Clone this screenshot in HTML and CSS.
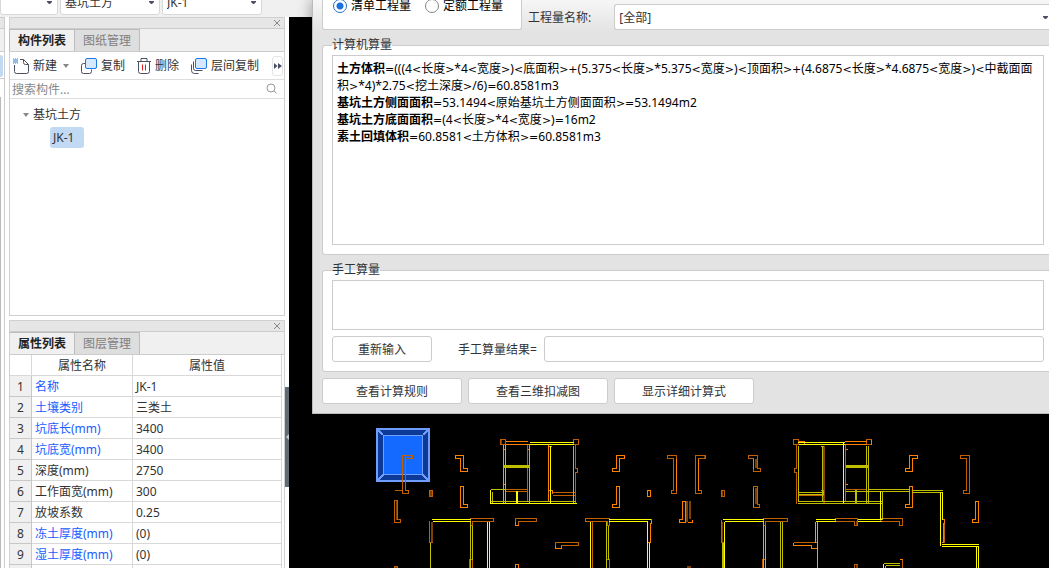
FILE: index.html
```html
<!DOCTYPE html>
<html lang="zh-CN">
<head>
<meta charset="utf-8">
<title>工程量计算</title>
<link rel="stylesheet" href="styles.css">
</head>
<body>
<div class="app">
  <header class="topbar">
    <select class="combo combo-floor" aria-label="楼层"><option></option></select>
    <select class="combo combo-type" aria-label="构件类型"><option>基坑土方</option></select>
    <select class="combo combo-item" aria-label="构件"><option>JK-1</option></select>
  </header>

  <div class="workspace">
    <aside class="rail">
      <div class="rail-head"></div>
      <div class="rail-tabs"></div>
      <div class="rail-active"><span></span></div>
      <div class="rail-body"></div>
    </aside>

    <div class="docks">
      <section class="dock">
        <div class="dock-title"><button class="close" aria-label="关闭"><svg viewBox="0 0 8 8"><path d="M1 1l6 6M7 1l-6 6"/></svg></button></div>
        <div class="tabs"><button class="tab active">构件列表</button><button class="tab">图纸管理</button></div>
        <div class="toolbar">
          <button class="tool">
            <svg class="icon" viewBox="0 0 16 16"><path d="M1.500 7v6.500q0 2 2 2h10q2 0 2-2v-7l-5-5H7M10.500 1.500v3q0 2 2 2h3"/><path class="dots" d="M0 1h1M2 1h1M4 1h1M1 2h1M3 2h1M0 3h1M2 3h1M4 3h1M1 4h1M3 4h1M0 5h1M2 5h1M4 5h1"/></svg>
            新建<i class="caret"></i>
          </button>
          <button class="tool">
            <svg class="icon" viewBox="0 0 16 16"><path d="M5 5.500H2.500q-2 0-2 2v6q0 2 2 2h6q2 0 2-2v-2"/><rect class="blue" x="4.500" y=".5" width="11" height="10" rx="1.500"/></svg>
            复制
          </button>
          <button class="tool">
            <svg class="icon icon-trash" viewBox="0 0 14 16"><path d="M0 3.500h14M4 3V.500h6V3M1.500 4v9.500q0 2 2 2h7q2 0 2-2V4"/><path class="red" d="M5.500 6.500v6M8.500 6.500v6"/></svg>
            删除
          </button>
          <button class="tool">
            <svg class="icon" viewBox="0 0 16 16"><path d="M2.500 3.500v7q0 2 2 2h7M.500 6.500v6q0 3 3 3h4"/><rect class="blue" x="4.500" y=".5" width="11" height="10" rx="1.500"/></svg>
            层间复制
          </button>
          <button class="more" aria-label="更多"><svg viewBox="0 0 8 6"><path d="M0 0l3.500 3L0 6zM4 0l4 3-4 3z"/></svg></button>
        </div>
        <label class="search"><input type="text" placeholder="搜索构件..." aria-label="搜索构件"><svg viewBox="0 0 12 12"><circle cx="5" cy="5" r="4"/><path d="M8 8l2.500 2.500"/></svg></label>
        <ul class="tree">
          <li><span class="node"><i class="caret"></i>基坑土方</span>
            <ul><li><span class="leaf">JK-1</span></li></ul>
          </li>
        </ul>
      </section>

      <section class="dock dock-props">
        <div class="dock-title"><button class="close" aria-label="关闭"><svg viewBox="0 0 8 8"><path d="M1 1l6 6M7 1l-6 6"/></svg></button></div>
        <div class="tabs"><button class="tab active">属性列表</button><button class="tab">图层管理</button></div>
        <table class="props">
          <colgroup><col class="col-no"><col class="col-name"><col></colgroup>
          <thead><tr><th></th><th>属性名称</th><th>属性值</th></tr></thead>
          <tbody>
            <tr><th>1</th><td class="key">名称</td><td>JK-1</td></tr>
            <tr><th>2</th><td class="key">土壤类别</td><td>三类土</td></tr>
            <tr><th>3</th><td class="key">坑底长(mm)</td><td>3400</td></tr>
            <tr><th>4</th><td class="key">坑底宽(mm)</td><td>3400</td></tr>
            <tr><th>5</th><td>深度(mm)</td><td>2750</td></tr>
            <tr><th>6</th><td>工作面宽(mm)</td><td>300</td></tr>
            <tr><th>7</th><td>放坡系数</td><td>0.25</td></tr>
            <tr><th>8</th><td class="key">冻土厚度(mm)</td><td>(0)</td></tr>
            <tr><th>9</th><td class="key">湿土厚度(mm)</td><td>(0)</td></tr>
            <tr><th></th><td></td><td></td></tr>
          </tbody>
        </table>
      </section>
    </div>

    <div class="splitter"><button class="collapse" aria-label="收起"><svg viewBox="0 0 3 6"><path d="M3 0v6L0 3z"/></svg></button></div>

    <main class="canvas">
      <svg class="plan" viewBox="289 17 760 551" preserveAspectRatio="xMinYMin slice">
        <g class="pit">
          <path class="slope" d="M377 429h52v52h-52z"/>
          <path class="floor" d="M383.500 435.500h39v39h-39z"/>
          <path class="edge" d="M377 429h52v52h-52z"/>
          <path class="ridge" d="M377 429l6 6M429 429l-6 6M377 481l6-6M429 481l-6-6"/>
        </g>
        <g class="brown">
          <path d="M431 490v6M397 501v19M432 522v21M756 459v9M756 488v16M722 491v5M687 501v21M690 501v18M722 522v21M824 446v57M705 456v2M857 521v4M501 440v4M395 567h2M857 565v3M687 567h4"/>
        </g>
        <g transform="translate(.5 .5)">
          <g class="wall-dim">
            <path d="M402 455h10v3h-7v32h3v3h-6zM394 490h8M429 490h3v6h-3z"/>
            <path d="M394 500h3v19h3v3h-6zM394 568v-2h3v2"/>
            <path d="M527 444v57M505 489h22M505 491h22M552 492h23M552 495h23M575 444v24h2v4h-2v30M573 439h5v5h-5zM500 439h5v5h-5z"/>
            <path d="M470 518h23v3h-21v4h-2zM429 520v22h3M469 568v-9h3v9"/>
            <path d="M515 518h21v3h-18v4h-3zM555 542h23v3h-17v3h-6z"/>
            <path d="M585 518h24v7h-2v-4h-22zM592 521v47M606 568v-9h3v9"/>
            <path d="M667 455h9v38h-5v-3h2v-32h-6zM695 455h10v3h-7v32h3v3h-6z"/>
            <path d="M748 455h9v13h3v3h-7v-13h-5zM753 486h4v18h2v3h-6z"/>
            <path d="M721 490h3v6h-3zM721 519v23h3M763 518h24v3h-22v4h-2zM762 568v-9h3v9"/>
            <path d="M793 439h5v5h-5zM796 444v24h-2v4h2v31M797 495h26M866 439h5v5h-5zM845 489h21M845 444v57"/>
            <path d="M835 518h22v7h-3v-4h-19zM880 518h22v7h-3v-4h-19zM793 542h24M960 455h9v38h-6v-3h3v-32h-6z"/>
            <path d="M942 519h2v23h-2M854 568v-4h3M902 568v-9"/>
          </g>
          <g class="wall">
            <path d="M455 455h8v13h4v3h-7v-13h-5zM460 486h3v18h4v3h-7z"/>
            <path d="M505 441h22M505 444h24M548 444v57M548 446h3M548 490h4v3M503 449h2M527 449h2M503 484h2"/>
            <path d="M515 521v4h3M515 568v-4h3v4M555 545v3h6v-3"/>
            <path d="M616 455h8v3h-5v13h-7v-3h4zM616 486h3v21h-7v-3h4zM647 490h3v6h-3z"/>
            <path d="M682 501h3v21h-6v-3h3zM687 522h5v-3M676 458v32M698 458v32M649 519h2v4h-1v19h-3M753 458v10M753 488v18"/>
            <path d="M844 441h22M844 444h22M798 441h6v3M871 439v5M820 446h3M820 490h3v3M845 449h2M845 484h2"/>
            <path d="M909 455h8v3h-5v13h-7v-3h4zM909 486h3v21h-7v-3h4zM793 542v3h18v3h6M975 501h3v21h-6v-3h3zM942 519h2v4h-1v19h-2M899 559h3"/>
          </g>
          <g class="beam-dim">
            <path d="M503 444v58M505 444v58M529 444v58M573 445v58M503 465h26M503 466h26M503 467h26M490 489h15M490 501h85M492 491v11M430 542v26M470 521v47M472 525v34"/>
            <path d="M606 521v47M608 525v34M763 521v47M765 525v43M780 521v47M782 521v47M722 542v26M723 542v26"/>
            <path d="M798 445v56M822 445v56M866 445v58M868 445v58M845 465h23M845 466h23M845 467h23M797 492h26M797 494h26M797 501h84M797 503h84M856 489v14M855 489v14"/>
            <path d="M845 491h64M868 489h41M911 490h31M911 492h31M882 491v28M817 521v47M815 521v21M883 563h16M885 565h14M885 565v3"/>
          </g>
          <g class="beam">
            <path d="M529 442h44M529 444h44M550 445v57M490 503h86M490 489v14M516 490v12M517 490v12M431 519h39M432 521h38M487 521v47M489 521v47"/>
            <path d="M608 519h42M608 521h39M647 521v47M649 542v26M590 521v47M722 519h41M724 521h39M724 521v47"/>
            <path d="M797 442h47M798 444h46M843 441v61M880 490v29M815 519h20M815 521h20M857 519h24M857 521h24M940 491v54M942 491v28M941 544h37M941 546h37M976 546v22M978 546v22M883 563v5"/>
          </g>
        </g>
      </svg>
    </main>
  </div>

  <section class="dialog" aria-label="查看工程量计算式">
    <div class="dialog-top">
      <div class="mode">
        <label><input type="radio" name="mode" checked>清单工程量</label>
        <label><input type="radio" name="mode">定额工程量</label>
      </div>
      <label class="quantity" for="quantity">工程量名称:</label>
      <select class="combo combo-quantity" id="quantity"><option>[全部]</option></select>
    </div>
    <fieldset class="group">
      <legend>计算机算量</legend>
      <div class="formula">
        <p><b>土方体积</b><i>=</i>(((4<i>&lt;</i>长度<i>&gt;</i>*4<i>&lt;</i>宽度<i>&gt;</i>)<i>&lt;</i>底面积<i>&gt;+</i>(5.375<i>&lt;</i>长度<i>&gt;</i>*5.375<i>&lt;</i>宽度<i>&gt;</i>)<i>&lt;</i>顶面积<i>&gt;+</i>(4.6875<i>&lt;</i>长度<i>&gt;</i>*4.6875<i>&lt;</i>宽度<i>&gt;</i>)<i>&lt;</i>中截面面<br>积<i>&gt;</i>*4)*2.75<i>&lt;</i>挖土深度<i>&gt;</i>/6)<i>=</i>60.8581m3</p>
        <p><b>基坑土方侧面面积</b><i>=</i>53.1494<i>&lt;</i>原始基坑土方侧面面积<i>&gt;=</i>53.1494m2</p>
        <p><b>基坑土方底面面积</b><i>=</i>(4<i>&lt;</i>长度<i>&gt;</i>*4<i>&lt;</i>宽度<i>&gt;</i>)<i>=</i>16m2</p>
        <p><b>素土回填体积</b><i>=</i>60.8581<i>&lt;</i>土方体积<i>&gt;=</i>60.8581m3</p>
      </div>
    </fieldset>
    <fieldset class="group">
      <legend>手工算量</legend>
      <textarea class="manual" aria-label="手工算量"></textarea>
      <div class="manual-row">
        <button class="btn btn-reset">重新输入</button>
        <label for="result">手工算量结果=</label>
        <input class="result" id="result" type="text">
      </div>
    </fieldset>
    <div class="actions">
      <button class="btn">查看计算规则</button>
      <button class="btn">查看三维扣减图</button>
      <button class="btn">显示详细计算式</button>
    </div>
  </section>
</div>
</body>
</html>
```
FILE: styles.css
```css
* { box-sizing: border-box; }
body, p, ul { margin: 0; padding: 0; }
ul { list-style: none; }
body, button, input, select, textarea {
  font: 12px/17px "Noto Sans", "Noto Sans CJK SC", sans-serif;
  color: #333;
}
button { border: 0; padding: 0; background: none; white-space: nowrap; }
svg { display: block; fill: none; }

.app { position: relative; height: 100vh; overflow: hidden; display: flex; flex-direction: column; background: #fff; }

.combo {
  appearance: none;
  height: 26px;
  padding: 0 4px;
  border: 1px solid #ccc;
  border-radius: 3px;
  background: #fff url("data:image/svg+xml,%3Csvg xmlns='http://www.w3.org/2000/svg' viewBox='0 0 5 3'%3E%3Cpath d='M0 0h5v1L3 3H2L0 1z' fill='%234a5068'/%3E%3C/svg%3E") no-repeat right 5px center / 5px 3px;
}
.topbar { flex: none; height: 17px; display: flex; align-items: flex-end; gap: 2px; padding-bottom: 2px; background: #f0f0f0; }
.topbar .combo { border-color: #d8d8d8; }
.combo-floor { width: 58px; }
.combo-type { width: 100px; }
.combo-item { width: 100px; }

.workspace { flex: 1; min-height: 0; display: flex; }

.rail { width: 5px; margin-right: 4px; display: flex; flex-direction: column; border-right: 1px solid #ccc; }
.rail-head { height: 12px; background: #e6e6e6; border: solid #ccc; border-width: 1px 0; }
.rail-tabs { height: 23px; background: #f0f0f0; border-bottom: 1px solid #ccc; }
.rail-active { height: 27px; padding: 3px 1px 2px 0; border-bottom: 1px solid #ccc; }
.rail-active span { display: block; height: 22px; background: #c2d9f3; border-radius: 0 3px 3px 0; }
.rail-body { flex: 1; margin-top: 18px; border-left: 1px solid #bbb; }

.docks { width: 276px; display: flex; flex-direction: column; gap: 4px; }
.dock { height: 299px; flex: none; display: flex; flex-direction: column; border: 1px solid #d0d0d0; }
.dock-props { height: auto; flex: 1; min-height: 0; overflow: hidden; border-bottom: 0; }
.dock-title { flex: none; height: 11px; display: flex; justify-content: flex-end; padding: 1px 3px; background: #e6e6e6; border-bottom: 1px solid #ccc; }
.close svg { width: 8px; height: 8px; stroke: #888; }
.tabs { flex: none; height: 23px; display: flex; background: #f0f0f0; border-bottom: 1px solid #ccc; }
.tab { width: 66px; margin-left: -1px; border: 1px solid #bcbcbc; border-bottom: 0; background: #dedede; color: #808080; }
.tab.active { background: #f0f0f0; color: #222; font-weight: bold; }

.toolbar { flex: none; height: 28px; display: flex; align-items: center; gap: 12px; padding-left: 3px; border-bottom: 1px solid #ddd; }
.tool { display: flex; align-items: center; gap: 4px; }
.icon { width: 16px; height: 16px; stroke: #4a5060; }
.icon-trash { width: 14px; }
.icon .blue { stroke: #1c78e6; fill: #d6e8fc; }
.icon .red { stroke: #e02020; }
.icon .dots { stroke: #1c78e6; }
.caret { width: 0; border: 3px solid transparent; border-top: 4px solid #888; border-bottom: 0; }
.tool .caret { margin-left: 2px; }
.more { flex: none; width: 11px; height: 20px; margin: 0 1px 0 auto; display: grid; place-items: center; border: 1px solid #e4e4e4; border-radius: 3px; }
.more svg { width: 8px; height: 6px; fill: #4a5068; }

.search { flex: none; height: 19px; display: flex; align-items: center; padding: 0 6px 0 2px; border-bottom: 1px solid #ddd; }
.search input { flex: 1; min-width: 0; border: 0; padding: 0; outline: 0; background: none; }
.search input::placeholder { color: #888; }
.search svg { width: 12px; height: 12px; stroke: #999; }

.tree { padding: 5px 0 0 13px; }
.node { display: flex; align-items: center; gap: 4px; height: 21px; }
.leaf { display: inline-block; margin: 2px 0 0 27px; padding: 2px 10px 2px 3px; background: #c2d9f3; border-radius: 3px; }

.props { width: 272px; flex: none; table-layout: fixed; border-collapse: separate; border-spacing: 0; }
.col-no { width: 22px; }
.col-name { width: 101px; }
.props th, .props td { height: 21px; padding: 0 3px; border: solid #d8d8d8; border-width: 0 1px 1px 0; font-weight: normal; text-align: left; line-height: 17px; }
.props th { padding: 0; text-align: center; }
.props tbody th { background: #f0f0f0; border-color: #c8c8c8; }
.props .key { color: #1a5cff; }

.splitter { width: 4px; padding-top: 370px; }
.collapse { width: 4px; height: 100px; display: flex; align-items: center; justify-content: flex-end; background: #5f6b77; }
.collapse svg { width: 3px; height: 6px; fill: #c4cad0; }

.canvas { flex: 1; min-width: 0; background: #000; }
.plan { width: 100%; height: 100%; shape-rendering: crispEdges; }
.wall { stroke: #ff8000; }
.wall-dim { stroke: #c06000; }
.brown { stroke: #804000; stroke-width: 2px; }
.beam { stroke: #ff0; }
.beam-dim { stroke: #bfbf00; }
.slope { fill: #0c3a96; }
.floor { fill: #146aff; stroke: #6f9eff; }
.edge { stroke: #6f9eff; stroke-width: 2px; }
.ridge { stroke: #6f9eff; stroke-width: 2px; }

.dialog {
  position: absolute; top: 0; left: 312px; right: 0;
  padding: 0 0 9px 9px;
  border: solid #bbb; border-width: 0 0 1px 1px;
  background: linear-gradient(#f6f6f6, #e3e3e3 32px);
  box-shadow: 0 0 14px rgba(0, 0, 0, .4);
}
.dialog-top { display: flex; align-items: flex-end; height: 30px; }
.mode { width: 200px; height: 30px; padding: 0 10px; display: flex; align-items: flex-start; gap: 14px; border: 1px solid #ccc; border-top: 0; border-radius: 0 0 3px 3px; background: #fff; }
.mode label { display: flex; align-items: center; gap: 4px; height: 12px; line-height: 12px; color: #000; }
.mode input { appearance: none; width: 14px; height: 14px; margin: 0; border: 1px solid #888; border-radius: 50%; background: #fff; }
.mode input:checked { border-color: #2a6fc4; background: radial-gradient(#1c6fe0 3px, #fff 4px); }
.quantity { margin: 0 23px 4px 6px; }
.combo-quantity { flex: 1; border-right: 0; border-radius: 3px 0 0 3px; background-position: right 1px center; }

.group { min-width: 0; margin: 8px 0 0; padding: 3px 5px 9px 9px; border: 1px solid #ccc; border-right: 0; border-radius: 3px 0 0 3px; background: #fff; }
.group legend { padding: 0; line-height: 14px; }
.formula { height: 190px; padding: 4px; border: 1px solid #ccc; color: #000; white-space: nowrap; overflow: hidden; }
.formula i { font: normal 11px/1 "DejaVu Sans", sans-serif; }
.manual { display: block; width: 100%; height: 50px; border: 1px solid #ccc; border-radius: 0; resize: none; }
.manual-row { display: flex; align-items: center; margin-top: 6px; }
.btn { width: 140px; height: 26px; border: 1px solid #ccc; border-radius: 3px; background: #fff; }
.btn-reset { width: 100px; margin-right: 26px; }
.result { flex: 1; height: 26px; margin-left: 7px; border: 1px solid #ccc; border-radius: 3px; }
.actions { display: flex; gap: 6px; margin-top: 6px; }
```
